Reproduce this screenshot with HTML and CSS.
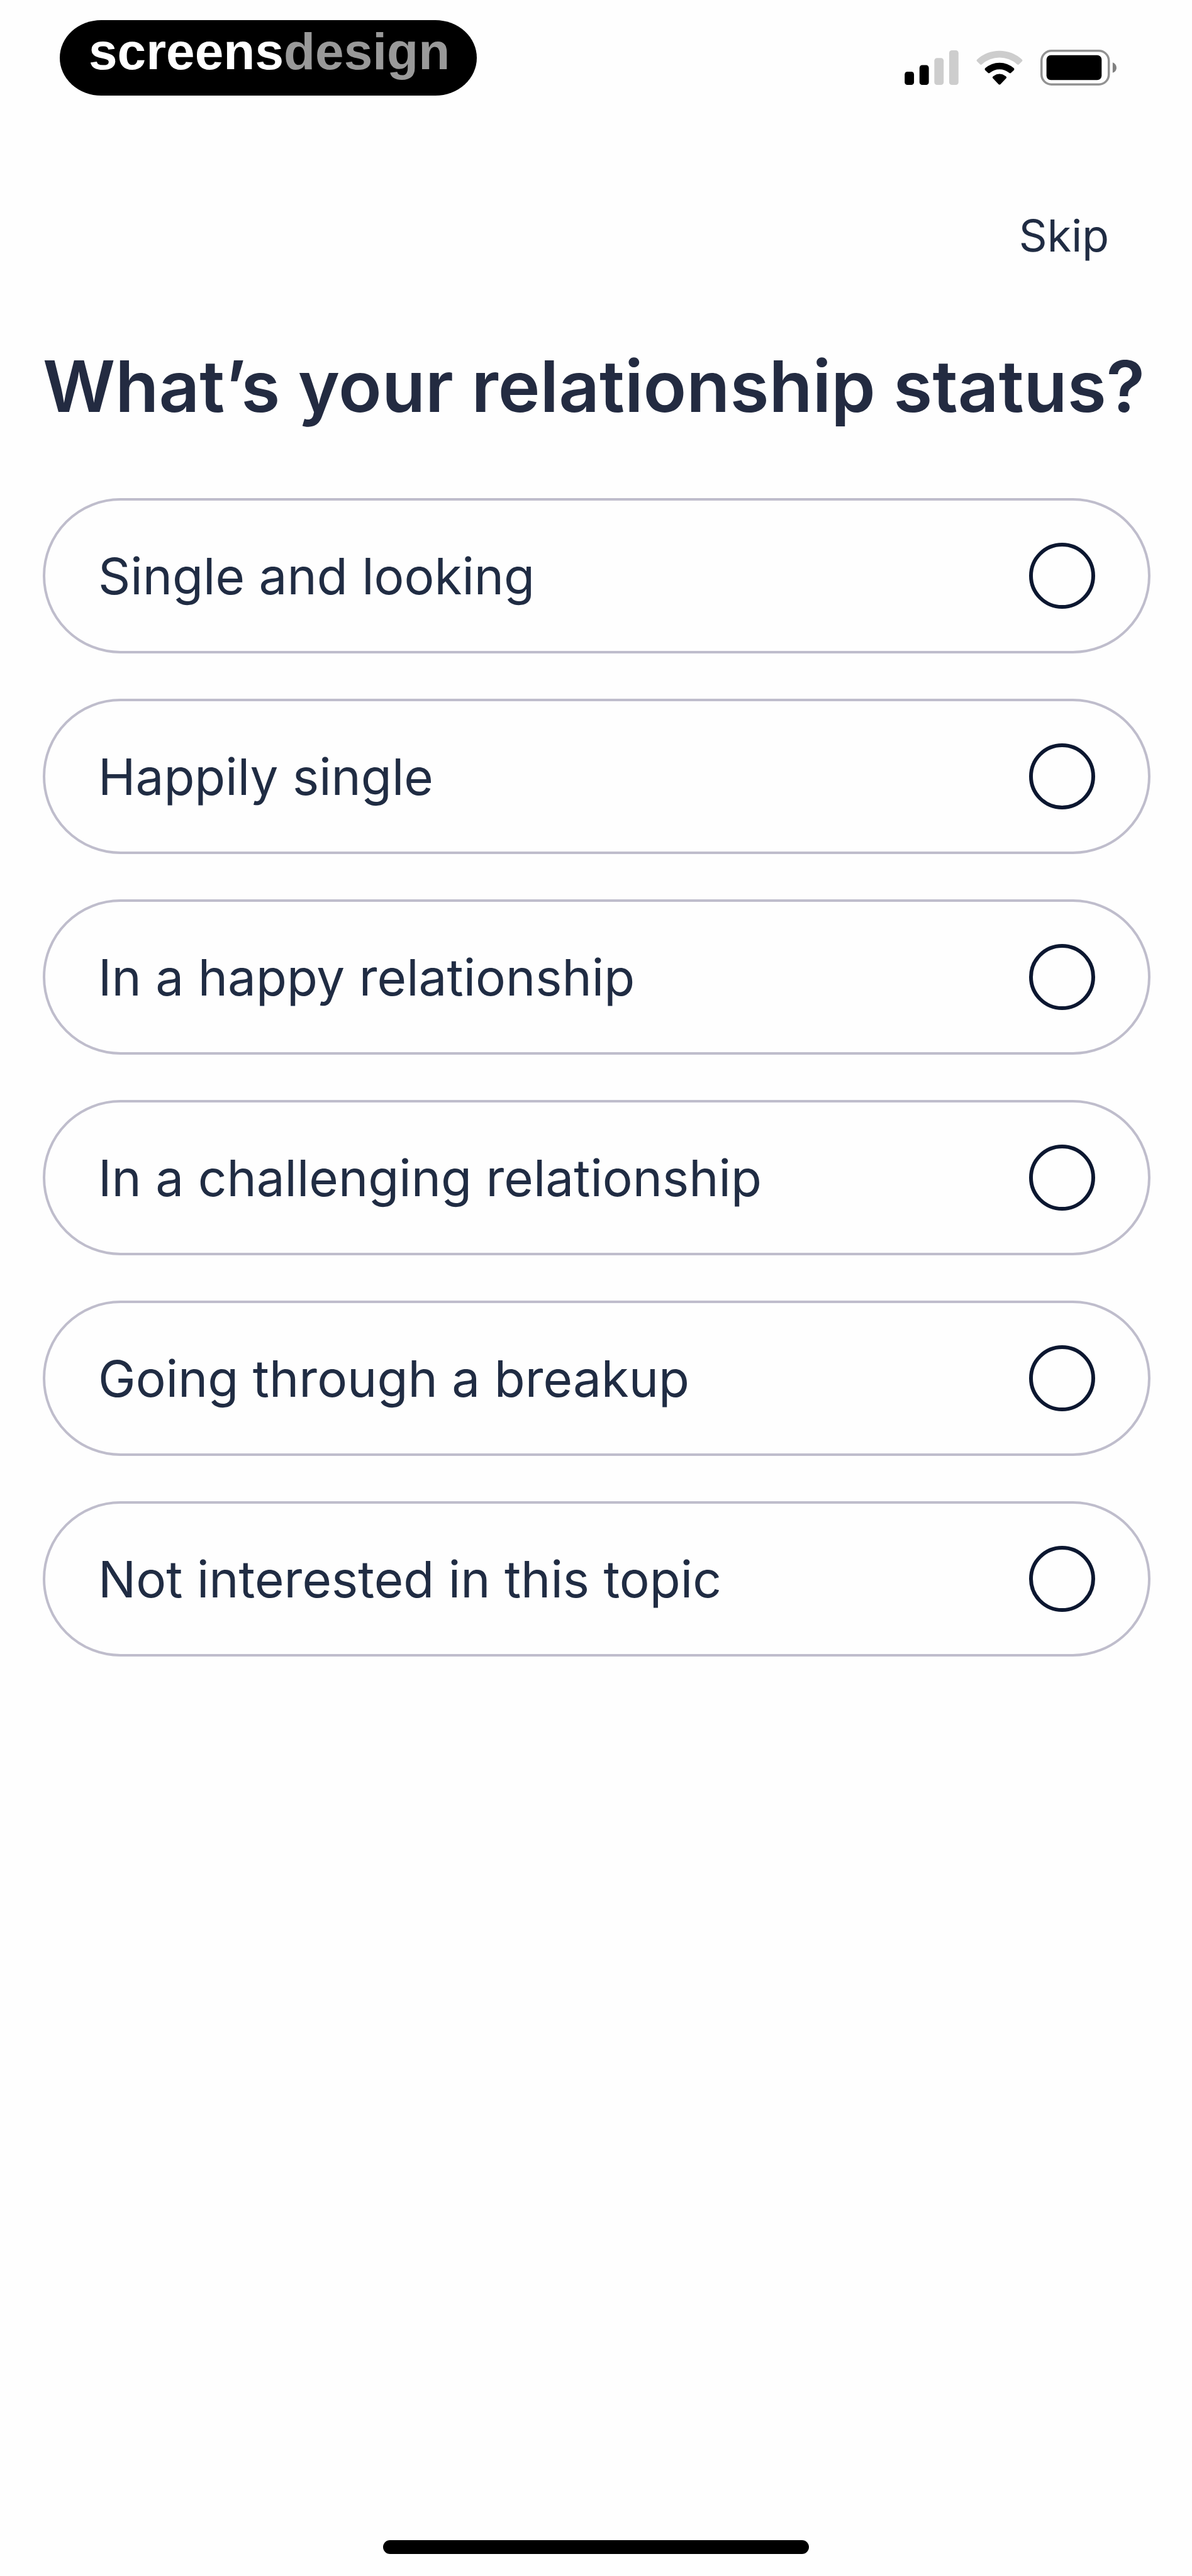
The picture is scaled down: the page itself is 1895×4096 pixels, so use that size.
FILE: index.html
```html
<!DOCTYPE html>
<html lang="en">
<head>
  <meta charset="UTF-8">
  <title>Relationship status</title>
  <meta name="viewport" content="width=device-width, initial-scale=1.0">
  <link rel="stylesheet" href="styles.css">
</head>
<body>
  <header class="status-bar">
    <div class="logo">screens<span class="logo-light">design</span></div>
    <div class="status-icons">
      <svg class="icon-signal" viewBox="0 0 98 63" aria-hidden="true">
        <rect x="0" y="39" width="17" height="24" rx="5"/>
        <rect x="27" y="27" width="17" height="36" rx="5"/>
        <rect x="54" y="14" width="17" height="49" rx="5" fill="#cdcdcd"/>
        <rect x="81" y="0" width="17" height="63" rx="5" fill="#cdcdcd"/>
      </svg>
      <svg class="icon-wifi" viewBox="0 0 84 63" aria-hidden="true">
        <path d="M1 17 A60 60 0 0 1 83 17 Q84.500 19 83 20 L77.500 25.500 Q76 27 74 25.500 A48 48 0 0 0 10 25.500 Q8 27 6.500 25.500 L1 20 Q-.5 19 1 17Z" fill="#cdcdcd"/>
        <path d="M16 32.500 A39 39 0 0 1 68 32.500 Q70 34.500 68 36.500 L63 41 Q61.500 42.500 59.500 41 A27 27 0 0 0 24.500 41 Q22.500 42.500 21 41 L16 36.500 Q14 34.500 16 32.500Z"/>
        <path d="M31 47 Q42 39 53 47 Q56 49 54 51 L44 61.500 Q42 63.500 40 61.500 L30 51 Q28 49 31 47Z"/>
      </svg>
      <svg class="icon-battery" viewBox="0 0 138 65" aria-hidden="true">
        <rect x="2" y="2" width="122" height="61" rx="18" fill="none" stroke="#929292" stroke-width="4"/>
        <rect x="11" y="10" width="100" height="45" rx="8"/>
        <path d="M131 23 Q138 26 138 33 Q138 39 131 42Z" fill="#808080"/>
      </svg>
    </div>
  </header>

  <main class="content">
    <button class="skip" type="button">Skip</button>
    <h1>What’s your relationship status?</h1>

    <form class="options">
      <label class="option">
        <span>Single and looking</span>
        <input type="radio" name="status" value="looking">
      </label>
      <label class="option">
        <span>Happily single</span>
        <input type="radio" name="status" value="single">
      </label>
      <label class="option">
        <span>In a happy relationship</span>
        <input type="radio" name="status" value="happy">
      </label>
      <label class="option">
        <span>In a challenging relationship</span>
        <input type="radio" name="status" value="challenging">
      </label>
      <label class="option">
        <span>Going through a breakup</span>
        <input type="radio" name="status" value="breakup">
      </label>
      <label class="option">
        <span>Not interested in this topic</span>
        <input type="radio" name="status" value="none">
      </label>
    </form>
  </main>

  <div class="home-indicator"></div>
</body>
</html>
```

FILE: styles.css
```css
* {
  box-sizing: border-box;
}

body {
  display: flex;
  flex-direction: column;
  min-height: 100vh;
  margin: 0;
  font-family: Inter, sans-serif;
  background-color: #fefefe;
  color: #202c43;
}

.status-bar {
  display: flex;
  justify-content: space-between;
  align-items: flex-end;
  padding: 32px 120px 0 95px;
}

.logo {
  padding: 0 43px 20px 46px;
  border-radius: 66px / 60px;
  background-color: #000;
  color: #fff;
  font-family: "Liberation Sans", sans-serif;
  font-size: 82px;
  font-weight: bold;
  line-height: 100px;
}

.logo-light {
  color: #999;
}

.status-icons {
  display: flex;
  align-items: center;
  gap: 28px;
  padding-bottom: 16px;
}

.icon-signal {
  width: 86px;
  height: 55px;
}

.icon-wifi {
  width: 74px;
  height: 55px;
}

.icon-battery {
  width: 121px;
  height: 57px;
}

.content {
  display: flex;
  flex-direction: column;
  flex: 1;
  padding: 182px 66px 0 68px;
}

.skip {
  align-self: flex-end;
  margin-right: 66px;
  padding: 0;
  border: none;
  background: none;
  color: inherit;
  font-family: inherit;
  font-size: 70px;
  line-height: 82px;
  cursor: pointer;
}

h1 {
  margin: 130px 0 110px;
  color: #232b41;
  font-size: 113px;
  font-weight: 600;
  line-height: 136px;
  white-space: nowrap;
}

.options {
  display: flex;
  flex-direction: column;
  gap: 72px;
}

.option {
  display: flex;
  justify-content: space-between;
  align-items: center;
  padding: 67px 84px;
  border: 4px solid #bfbdcc;
  border-radius: 124px;
  font-size: 80px;
  line-height: 104px;
  cursor: pointer;
}

.option input {
  appearance: none;
  width: 105px;
  height: 105px;
  margin: 0;
  border: 6px solid #0c1730;
  border-radius: 50%;
}

.option input:checked {
  background-color: #0c1730;
}

.home-indicator {
  width: 677px;
  height: 22px;
  margin: 0 auto 35px;
  border-radius: 11px;
  background-color: #000;
}
```
